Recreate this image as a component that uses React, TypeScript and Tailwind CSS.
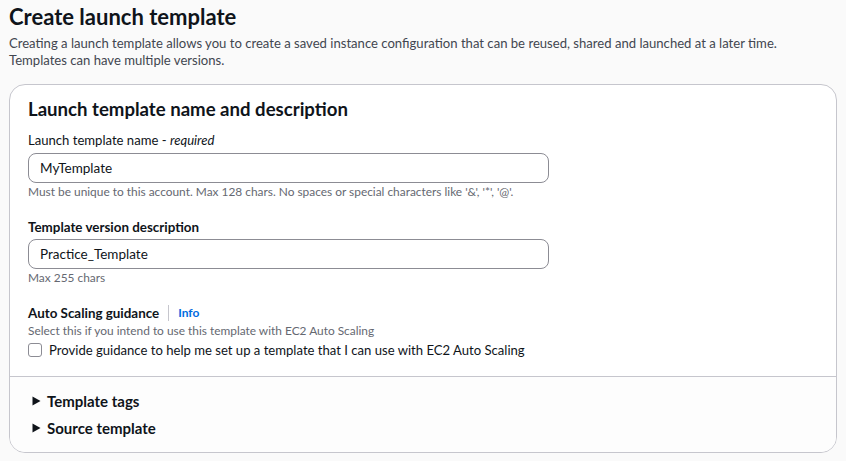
import React from "react";

export default function App() {
  return (
    <div
      className="w-[846px] h-[461px] bg-[#fafafa] text-[#0f141a] overflow-hidden"
      style={{ fontFamily: 'Lato, "Open Sans", sans-serif' }}
    >
      <div className="pl-[9px] pr-[9px] pt-[2px]">
        <h1 className="text-[22px] leading-[30px] font-bold">Create launch template</h1>
        <p className="text-[13.1px] leading-[17px] text-[#424650] mt-[3px]">
          Creating a launch template allows you to create a saved instance configuration that can be reused, shared and launched at a later time.
          <br />
          Templates can have multiple versions.
        </p>
        <div className="mt-[15px] h-[369px] rounded-[16px] border border-[#c6c6cd] bg-white flex flex-col overflow-hidden">
          <div className="px-[18px] pt-[11px] pb-[16px]">
            <h2 className="text-[18.6px] leading-[26px] font-bold">Launch template name and description</h2>
            <div className="mt-[8px] text-[13.1px] leading-[20px]">
              Launch template name - <i>required</i>
            </div>
            <div className="mt-[3px] w-[521px] h-[30px] rounded-[8px] border border-[#8c8c94] px-[11px] flex items-center text-[13.5px]">
              MyTemplate
            </div>
            <div className="mt-[1px] text-[11.9px] leading-[16px] text-[#656871]">
              Must be unique to this account. Max 128 chars. No spaces or special characters like '&amp;', '*', '@'.
            </div>
            <div className="mt-[17px] text-[13.4px] leading-[20px] font-bold">Template version description</div>
            <div className="mt-[2px] w-[521px] h-[30px] rounded-[8px] border border-[#8c8c94] px-[11px] flex items-center text-[13.5px]">
              Practice_Template
            </div>
            <div className="mt-[1px] text-[11.9px] leading-[16px] text-[#656871]">Max 255 chars</div>
            <div className="mt-[17px] flex items-center text-[13.4px] leading-[20px]">
              <span className="font-bold">Auto Scaling guidance</span>
              <span className="mx-[9px] w-px h-[16px] bg-[#c6c6cd]" />
              <span className="text-[12px] font-bold text-[#006ce0]">Info</span>
            </div>
            <div className="text-[11.9px] leading-[15px] text-[#656871]">
              Select this if you intend to use this template with EC2 Auto Scaling
            </div>
            <label className="mt-[2px] flex items-center gap-[7px] text-[13.1px] leading-[20px]">
              <span className="w-[14px] h-[14px] rounded-[3px] border border-[#8c8c94] bg-white" />
              <span>Provide guidance to help me set up a template that I can use with EC2 Auto Scaling</span>
            </label>
          </div>
          <div className="border-t border-[#c6c6cd] bg-[#fdfdfd] flex-1 px-[22px] pt-[14px]">
            <div className="flex items-center gap-[6px] text-[15px] leading-[20px] font-bold">
              <svg width="9" height="10" viewBox="0 0 9 10"><path d="M0.5 0.5 L8.5 5 L0.5 9.5 Z" fill="#0f141a" /></svg>
              Template tags
            </div>
            <div className="mt-[7px] flex items-center gap-[6px] text-[15px] leading-[20px] font-bold">
              <svg width="9" height="10" viewBox="0 0 9 10"><path d="M0.5 0.5 L8.5 5 L0.5 9.5 Z" fill="#0f141a" /></svg>
              Source template
            </div>
          </div>
        </div>
      </div>
    </div>
  );
}
